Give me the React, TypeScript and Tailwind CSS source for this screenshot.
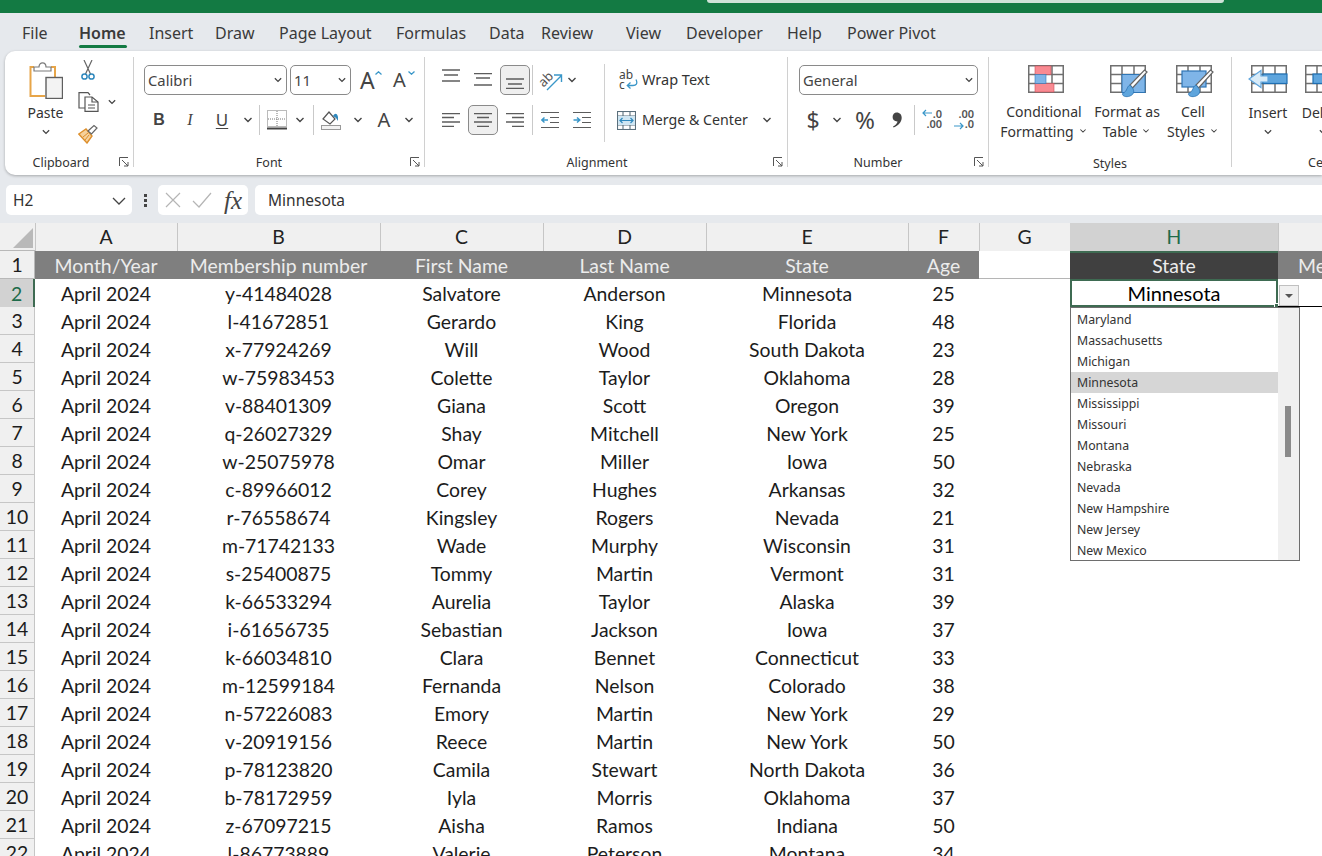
const tabs = [
  { label: "File", cls: "ml-[22px] w-[57px]" },
  { label: "Home", cls: "w-[70px] font-semibold", active: true },
  { label: "Insert", cls: "w-[66px]" },
  { label: "Draw", cls: "w-[64px]" },
  { label: "Page Layout", cls: "w-[117px]" },
  { label: "Formulas", cls: "w-[93px]" },
  { label: "Data", cls: "w-[52px]" },
  { label: "Review", cls: "w-[85px]" },
  { label: "View", cls: "w-[60px]" },
  { label: "Developer", cls: "w-[101px]" },
  { label: "Help", cls: "w-[60px]" },
  { label: "Power Pivot", cls: "w-[100px]" },
];

const rows = [
  ["y-41484028", "Salvatore", "Anderson", "Minnesota", "25"],
  ["l-41672851", "Gerardo", "King", "Florida", "48"],
  ["x-77924269", "Will", "Wood", "South Dakota", "23"],
  ["w-75983453", "Colette", "Taylor", "Oklahoma", "28"],
  ["v-88401309", "Giana", "Scott", "Oregon", "39"],
  ["q-26027329", "Shay", "Mitchell", "New York", "25"],
  ["w-25075978", "Omar", "Miller", "Iowa", "50"],
  ["c-89966012", "Corey", "Hughes", "Arkansas", "32"],
  ["r-76558674", "Kingsley", "Rogers", "Nevada", "21"],
  ["m-71742133", "Wade", "Murphy", "Wisconsin", "31"],
  ["s-25400875", "Tommy", "Martin", "Vermont", "31"],
  ["k-66533294", "Aurelia", "Taylor", "Alaska", "39"],
  ["i-61656735", "Sebastian", "Jackson", "Iowa", "37"],
  ["k-66034810", "Clara", "Bennet", "Connecticut", "33"],
  ["m-12599184", "Fernanda", "Nelson", "Colorado", "38"],
  ["n-57226083", "Emory", "Martin", "New York", "29"],
  ["v-20919156", "Reece", "Martin", "New York", "50"],
  ["p-78123820", "Camila", "Stewart", "North Dakota", "36"],
  ["b-78172959", "Iyla", "Morris", "Oklahoma", "37"],
  ["z-67097215", "Aisha", "Ramos", "Indiana", "50"],
  ["l-86773889", "Valerie", "Peterson", "Montana", "34"],
];

const states = [
  "Maryland",
  "Massachusetts",
  "Michigan",
  "Minnesota",
  "Mississippi",
  "Missouri",
  "Montana",
  "Nebraska",
  "Nevada",
  "New Hampshire",
  "New Jersey",
  "New Mexico",
];

const columns = ["A", "B", "C", "D", "E", "F", "G", "H", ""];
const titles = ["Month/Year", "Membership number", "First Name", "Last Name", "State", "Age"];

function Chev({ className = "" }: { className?: string }) {
  return (
    <svg viewBox="0 0 10 6" className={`w-[10px] h-[6px] shrink-0 ${className}`} fill="none" stroke="#444" strokeWidth="1.4">
      <path d="M1.5 1 L5 4.5 L8.5 1" />
    </svg>
  );
}

function Launcher() {
  return (
    <svg viewBox="0 0 10 10" className="absolute right-[4px] bottom-0 w-[10px] h-[10px]" fill="none" stroke="#555" strokeWidth="1">
      <path d="M0.5 9 V0.5 H9" />
      <path d="M3 3 L9 9 M9 5 V9 H5" />
    </svg>
  );
}

function Sep({ className = "" }: { className?: string }) {
  return <div className={`w-px h-[30px] bg-[#c9c9c9] shrink-0 ${className}`}></div>;
}

function Lines({ y, xs }: { y: number[]; xs: [number, number][] }) {
  return (
    <svg viewBox="0 0 18 14" className="w-[18px] h-[14px] shrink-0" stroke="#5c5c5c" strokeWidth="1.3">
      {y.map((v, i) => (
        <line key={v} x1={xs[i][0]} x2={xs[i][1]} y1={v} y2={v} />
      ))}
    </svg>
  );
}

function ActiveBox({ children, className = "" }: { children: React.ReactNode; className?: string }) {
  return (
    <div className={`w-[30px] h-[30px] rounded-[5px] border border-[#8a8a8a] bg-[#efefef] flex items-center justify-center shrink-0 ${className}`}>
      {children}
    </div>
  );
}

function Indent({ flip }: { flip?: boolean }) {
  return (
    <svg viewBox="0 0 18 18" className="w-[18px] h-[18px] shrink-0" fill="none" stroke="#5c5c5c" strokeWidth="1.2">
      <path d="M0 1.5 H18 M9 6.5 H18 M9 11.5 H18 M0 16.5 H18" />
      {flip ? (
        <path d="M0.5 9 H6.5 M4 6.5 L6.8 9 L4 11.5" stroke="#3a97c9" strokeWidth="1.5" />
      ) : (
        <path d="M7 9 H1 M3.5 6.5 L0.8 9 L3.5 11.5" stroke="#3a97c9" strokeWidth="1.5" />
      )}
    </svg>
  );
}

function PasteIcon() {
  return (
    <svg viewBox="0 0 34 38" className="w-[34px] h-[38px]" fill="none">
      <path d="M5 6 H1.5 V35 H16 M22 6 H26 V16" stroke="#e7a548" strokeWidth="2" />
      <path d="M5 10 V6 H10 C10 0.5 17 0.5 17 6 H22 V10 Z" fill="#fff" stroke="#7a7a7a" strokeWidth="1.2" />
      <rect x="17" y="16.5" width="16.5" height="21" fill="#f3f3f3" stroke="#5f5f5f" strokeWidth="1.4" />
    </svg>
  );
}

function CutIcon() {
  return (
    <svg viewBox="0 0 14 20" className="w-[14px] h-[20px]" fill="none">
      <path d="M3 0 L9.5 14 M11 0 L4.5 14" stroke="#666" strokeWidth="1.2" />
      <circle cx="3.5" cy="16.5" r="2.6" stroke="#2f88bd" strokeWidth="1.5" />
      <circle cx="10.5" cy="16.5" r="2.6" stroke="#2f88bd" strokeWidth="1.5" />
    </svg>
  );
}

function CopyIcon() {
  return (
    <svg viewBox="0 0 21 20" className="w-[21px] h-[20px]" fill="none" stroke="#555" strokeWidth="1.2">
      <path d="M7 16 H1 V0.6 H10 L12 3" />
      <path d="M7 5 H14 L20 10 V19.4 H7 Z" fill="#fff" />
      <path d="M14 5 V10 H20 M10 13 H17 M10 16 H17" />
    </svg>
  );
}

function PainterIcon() {
  return (
    <svg viewBox="0 0 20 20" className="w-[20px] h-[20px]" fill="none">
      <path d="M0.8 10 L8 5 L14 12 L9 19 Z" fill="#f6d19b" stroke="#dd8f2c" strokeWidth="1.4" />
      <path d="M5 13 L10 9 M7 16 L11 11" stroke="#dd8f2c" strokeWidth="1" />
      <path d="M10 7 L16 1.5 L19 4 L13.5 10 Z" fill="#fff" stroke="#666" strokeWidth="1.2" />
    </svg>
  );
}

function BigA({ up }: { up?: boolean }) {
  return (
    <div className="relative flex w-[20px] h-[24px] items-center">
      <span className={up ? "text-[23px] leading-none text-[#444]" : "text-[20px] leading-none text-[#444]"}>A</span>
      <svg viewBox="0 0 7 4" className="absolute right-[-2px] top-[3px] w-[7px] h-[4px]" fill="none" stroke="#3a97c9" strokeWidth="1.3">
        <path d={up ? "M0.5 3.5 L3.5 0.8 L6.5 3.5" : "M0.5 0.5 L3.5 3.2 L6.5 0.5"} />
      </svg>
    </div>
  );
}

function BordersIcon() {
  return (
    <svg viewBox="0 0 20 20" className="w-[20px] h-[20px] shrink-0" fill="none" stroke="#777" strokeWidth="1" strokeDasharray="1 1">
      <rect x="0.5" y="0.5" width="19" height="16" />
      <path d="M10 1 V17 M1 9 H19" />
      <path d="M0 18.5 H20" stroke="#444" strokeWidth="2" strokeDasharray="none" />
    </svg>
  );
}

function FillIcon() {
  return (
    <svg viewBox="0 0 20 20" className="w-[20px] h-[20px] shrink-0" fill="none">
      <path d="M2 9 L8 2 L14 9 L9 14 Z" fill="#fff" stroke="#555" strokeWidth="1.2" />
      <path d="M12 6 C14 3 16 3 17 7 L17 11 L15 8 Z" fill="#2f88bd" />
      <rect x="0.5" y="15.5" width="19" height="4" fill="#f2f2f2" stroke="#999" />
    </svg>
  );
}

function OrientIcon() {
  return (
    <svg viewBox="0 0 22 20" className="w-[22px] h-[20px] shrink-0 overflow-visible" fill="none">
      <text x="-1" y="13" fontSize="13" fill="#555" transform="rotate(-45 7 10)">ab</text>
      <path d="M7 20 L21 6 M14 5 H21.5 V12" stroke="#3a97c9" strokeWidth="1.4" />
    </svg>
  );
}

function WrapIcon() {
  return (
    <div className="relative w-[18px] h-[20px] shrink-0 text-[12px] leading-[10px] text-[#444]">
      <div>ab</div>
      <div>c</div>
      <svg viewBox="0 0 12 10" className="absolute left-[7px] top-[9px] w-[12px] h-[10px]" fill="none" stroke="#3a97c9" strokeWidth="1.3">
        <path d="M10 0.5 C12 5 10 6.5 7 6.5 H1.5 M4.5 3.5 L1.3 6.5 L4.5 9.5" />
      </svg>
    </div>
  );
}

function MergeIcon() {
  return (
    <svg viewBox="0 0 19 19" className="w-[19px] h-[19px] shrink-0" fill="none" stroke="#5a6f7c" strokeWidth="1.1">
      <rect x="0.5" y="0.5" width="18" height="18" />
      <path d="M0.5 5 H18.5 M0.5 14 H18.5 M6 0.5 V5 M13 0.5 V5 M6 14 V18.5 M13 14 V18.5" />
      <rect x="1" y="5" width="17" height="9" fill="#cfe6f3" stroke="none" />
      <path d="M3 9.5 H16 M5.5 7 L3 9.5 L5.5 12 M13.5 7 L16 9.5 L13.5 12" stroke="#2f88bd" strokeWidth="1.2" />
    </svg>
  );
}

function CommaIcon() {
  return (
    <svg viewBox="0 0 10 16" className="w-[10px] h-[16px] shrink-0">
      <path d="M4.6 0.5 C8 0.5 9.7 2.8 9.7 5.8 C9.7 10 6.4 13.8 1.6 15.5 L1 14.4 C3.6 13 5.2 11.2 5.6 9.4 C2.8 9.6 0.6 8 0.6 5 C0.6 2.3 2.4 0.5 4.6 0.5 Z" fill="#444" />
    </svg>
  );
}

function TableGrid() {
  return <path d="M0.75 0.75 H35.25 V27.25 H0.75 Z M0.75 9.5 H35.25 M0.75 18.5 H35.25 M12 0.75 V27.25 M24 0.75 V27.25" stroke="#6f6f6f" strokeWidth="1.5" fill="none" />;
}

function CondIcon() {
  return (
    <svg viewBox="0 0 36 28" className="w-[36px] h-[28px]">
      <TableGrid />
      <rect x="7" y="1" width="16" height="8.5" fill="#f98a92" stroke="#c8505a" strokeWidth="0.6" />
      <rect x="7" y="18.5" width="19" height="8.5" fill="#f98a92" stroke="#c8505a" strokeWidth="0.6" />
      <rect x="7" y="9.5" width="11" height="9" fill="#7fb5e8" stroke="#2f76b5" strokeWidth="0.6" />
    </svg>
  );
}

function Brush() {
  return (
    <g>
      <path d="M37 7 L34.5 5 L20 20 L22.5 23 Z" fill="#fff" stroke="#666" strokeWidth="1.2" />
      <path d="M20 20 C16 22 18 26 13 28 C11 30 15 33 20 31 C25 29 24 25 22.5 23 Z" fill="#5ea5dd" stroke="#2f76b5" strokeWidth="0.8" />
    </g>
  );
}

function TableIcon() {
  return (
    <svg viewBox="0 0 38 34" className="w-[38px] h-[34px]">
      <TableGrid />
      <rect x="12" y="9.5" width="23" height="18" fill="#7fb5e8" stroke="#2f76b5" strokeWidth="1" />
      <Brush />
    </svg>
  );
}

function StylesIcon() {
  return (
    <svg viewBox="0 0 38 34" className="w-[38px] h-[34px]">
      <TableGrid />
      <rect x="6" y="6" width="24" height="16" fill="#7fb5e8" stroke="#2f76b5" strokeWidth="1.2" />
      <Brush />
    </svg>
  );
}

function InsertIcon() {
  return (
    <svg viewBox="0 0 40 28" className="w-[40px] h-[28px]">
      <g transform="translate(3 0)"><TableGrid /></g>
      <rect x="15" y="9" width="24" height="9.5" fill="#5ea5dd" stroke="#1f6fb2" strokeWidth="1.2" />
      <path d="M13 5.5 L1 14 L13 22.5 V17 H20 V11 H13 Z" fill="#d8ebf8" stroke="#5ea5dd" strokeWidth="1.2" />
    </svg>
  );
}

function DeleteIcon() {
  return (
    <svg viewBox="0 0 36 28" className="w-[36px] h-[28px]">
      <TableGrid />
      <rect x="8" y="9" width="27" height="9.5" fill="#5ea5dd" stroke="#1f6fb2" strokeWidth="1.2" />
    </svg>
  );
}

function Select({ label, className }: { label: string; className: string }) {
  return (
    <div className={`h-[30px] rounded-[5px] border border-[#8a8a8a] flex items-center justify-between pl-[3px] pr-[3px] text-[14.8px] text-[#444] shrink-0 ${className}`}>
      <span>{label}</span>
      <Chev className="scale-90" />
    </div>
  );
}

function Group({ label, className, labelClass = "", launcher, children }: { label?: string; className: string; labelClass?: string; launcher?: boolean; children: React.ReactNode }) {
  return (
    <div className={`relative h-[110px] border-r border-[#d0d0d0] flex flex-col shrink-0 ${className}`}>
      <div className="flex-1 min-h-0">{children}</div>
      {label && <div className={`h-[18px] -mb-[5px] text-[12.5px] leading-[18px] text-center text-[#333] ${labelClass}`}>{label}</div>}
      {launcher && <Launcher />}
    </div>
  );
}

function StyleButton({ icon, line1, line2, className }: { icon: React.ReactNode; line1: string; line2: string; className: string }) {
  return (
    <div className={`flex flex-col items-center shrink-0 ${className}`}>
      <div className="h-[37px] flex items-start justify-center pl-[3px]">{icon}</div>
      <div className="text-[14px] leading-[19.5px] text-center text-[#333] whitespace-nowrap">{line1}</div>
      <div className="text-[14px] leading-[19.5px] flex items-center gap-[4px] text-[#333] whitespace-nowrap">
        {line2}
        <Chev className="scale-75" />
      </div>
    </div>
  );
}

function Ribbon() {
  return (
    <div className="ml-[5px] h-[124px] pt-[6px] bg-white rounded-l-[10px] shadow-[0_1px_3px_rgba(0,0,0,0.28)] flex overflow-hidden">
      <Group label="Clipboard" launcher className="w-[129px] pr-[16px]">
        <div className="flex pl-[11px] pt-[4px]">
          <div className="w-[60px] flex flex-col items-center">
            <PasteIcon />
            <div className="text-[14px] leading-[20px] mt-[4px] text-[#333]">Paste</div>
            <Chev className="mt-[6px] scale-90" />
          </div>
          <div className="flex flex-col pl-[3px] -mt-[1px]">
            <div className="pl-[3px]"><CutIcon /></div>
            <div className="flex items-center mt-[12px]">
              <CopyIcon />
              <Chev className="ml-[8px] scale-90" />
            </div>
            <div className="mt-[12px]"><PainterIcon /></div>
          </div>
        </div>
      </Group>

      <Group label="Font" launcher labelClass="pr-[20px]" className="w-[291px]">
        <div className="pt-[8px] pl-[10px]">
          <div className="flex items-center">
            <Select label="Calibri" className="w-[143px]" />
            <Select label="11" className="w-[61px] ml-[3px]" />
            <div className="ml-[9px]"><BigA up /></div>
            <div className="ml-[13px]"><BigA /></div>
          </div>
          <div className="flex items-center h-[30px] mt-[10px] text-[#444]">
            <div className="w-[30px] shrink-0 text-center font-bold text-[16px] font-['Liberation_Sans']">B</div>
            <div className="w-[30px] shrink-0 ml-px text-center italic text-[16px] font-['Liberation_Serif']">I</div>
            <div className="w-[30px] shrink-0 ml-[2px] text-center text-[17px] underline underline-offset-2">U</div>
            <Chev className="ml-[6px]" />
            <Sep className="ml-[6px]" />
            <div className="ml-[7px]"><BordersIcon /></div>
            <Chev className="ml-[8px]" />
            <Sep className="ml-[8px]" />
            <div className="ml-[7px]"><FillIcon /></div>
            <Chev className="ml-[12px]" />
            <div className="ml-[11px] w-[20px] shrink-0 text-center text-[20px] leading-none">A</div>
            <Chev className="ml-[10px]" />
          </div>
        </div>
      </Group>

      <Group label="Alignment" launcher labelClass="pr-[18px]" className="w-[363px]">
        <div className="flex pt-[7px]">
          <div className="w-[179px] pl-[17px] pt-px shrink-0">
            <div className="flex items-center h-[30px]">
              <div className="-mt-[8px]"><Lines y={[1, 6, 12]} xs={[[0, 18], [2, 16], [0, 18]]} /></div>
              <div className="ml-[14px]"><Lines y={[0.7, 5, 12]} xs={[[0, 18], [2, 16], [0, 18]]} /></div>
              <ActiveBox className="ml-[8px]"><div className="pt-[4px]"><Lines y={[4, 9, 13.4]} xs={[[0, 18], [2, 16], [0, 18]]} /></div></ActiveBox>
              <Sep className="ml-[2px]" />
              <div className="ml-[7px]"><OrientIcon /></div>
              <Chev className="ml-[5px]" />
            </div>
            <div className="flex items-center h-[30px] mt-[10px]">
              <Lines y={[0.7, 4.5, 9, 13.3]} xs={[[0, 18], [0, 12], [0, 18], [0, 12]]} />
              <ActiveBox className="ml-[8px]"><Lines y={[0.7, 4.5, 9, 13.3]} xs={[[0, 18], [3, 15], [0, 18], [3, 15]]} /></ActiveBox>
              <div className="ml-[8px]"><Lines y={[0.7, 4.5, 9, 13.3]} xs={[[0, 18], [6, 18], [0, 18], [6, 18]]} /></div>
              <Sep className="ml-[8px]" />
              <div className="ml-[8px]"><Indent /></div>
              <div className="ml-[14px]"><Indent flip /></div>
            </div>
          </div>
          <div className="w-px h-[78px] bg-[#d0d0d0] shrink-0"></div>
          <div className="pl-[12px] pt-px text-[#333]">
            <div className="flex items-center h-[30px] text-[14.5px]">
              <div className="ml-[2px]"><WrapIcon /></div>
              <span className="ml-[5px]">Wrap Text</span>
            </div>
            <div className="flex items-center h-[30px] mt-[10px] text-[14.2px]">
              <MergeIcon />
              <span className="ml-[6px] w-[120px]">Merge &amp; Center</span>
              <Chev />
            </div>
          </div>
        </div>
      </Group>

      <Group label="Number" launcher labelClass="pr-[20px]" className="w-[201px]">
        <div className="pt-[8px] pl-[11px]">
          <Select label="General" className="w-[179px]" />
          <div className="flex items-center h-[30px] mt-[10px] text-[#444]">
            <div className="w-[20px] shrink-0 ml-[4px] text-center text-[23px] leading-none">$</div>
            <Chev className="ml-[9px]" />
            <div className="w-[22px] shrink-0 ml-[12px] text-center text-[24px] leading-none">%</div>
            <div className="w-[14px] shrink-0 ml-[14px] flex justify-center"><CommaIcon /></div>
            <Sep className="ml-[10px]" />
            <div className="ml-[7px] relative w-[20px] h-[22px] shrink-0 text-[11px] leading-[10px] font-semibold text-right text-[#555]">
              <div>.0</div>
              <div>.00</div>
              <svg viewBox="0 0 10 8" className="absolute left-0 top-0 w-[10px] h-[8px]" fill="none" stroke="#3a97c9" strokeWidth="1.2"><path d="M10 4 H1 M4 1 L1 4 L4 7" /></svg>
            </div>
            <div className="ml-[12px] relative w-[20px] h-[22px] shrink-0 text-[11px] leading-[10px] font-semibold text-right text-[#555]">
              <div>.00</div>
              <div>.0</div>
              <svg viewBox="0 0 10 8" className="absolute left-0 bottom-[1px] w-[10px] h-[8px]" fill="none" stroke="#3a97c9" strokeWidth="1.2"><path d="M0 4 H9 M6 1 L9 4 L6 7" /></svg>
            </div>
          </div>
        </div>
      </Group>

      <Group label="Styles" labelClass="pt-px" className="w-[243px]">
        <div className="flex pt-[8px] pl-[11px]">
          <StyleButton icon={<CondIcon />} line1="Conditional" line2="Formatting" className="w-[88px]" />
          <StyleButton icon={<TableIcon />} line1="Format as" line2="Table" className="w-[78px]" />
          <StyleButton icon={<StylesIcon />} line1="Cell" line2="Styles" className="w-[50px] ml-[2px]" />
        </div>
      </Group>

      <div className="flex pt-[8px] pl-[6px] shrink-0 relative h-[110px] text-[14px] text-[#333]">
        <div className="w-[60px] flex flex-col items-center shrink-0">
          <InsertIcon />
          <div className="mt-[10px] leading-[20px]">Insert</div>
          <Chev className="mt-[6px] scale-90" />
        </div>
        <div className="w-[60px] -ml-[5px] flex flex-col items-center shrink-0">
          <DeleteIcon />
          <div className="mt-[10px] leading-[20px]">Delete</div>
          <Chev className="mt-[6px] scale-90" />
        </div>
        <div className="absolute left-[76px] -bottom-[5px] h-[18px] text-[12.5px] leading-[18px]">Cells</div>
      </div>
    </div>
  );
}

function FormulaBar() {
  return (
    <div className="h-[30px] mt-[10px] flex items-center text-[15.5px] text-[#333]">
      <div className="ml-[6px] w-[126px] h-[30px] pt-px bg-white rounded-[5px] flex items-center justify-between pl-[7px] pr-[6px]">
        <span>H2</span>
        <svg viewBox="0 0 14 8" className="w-[14px] h-[8px]" fill="none" stroke="#444" strokeWidth="1.3"><path d="M1 1 L7 7 L13 1" /></svg>
      </div>
      <div className="w-[26px] flex flex-col items-center gap-[2px]">
        <div className="w-[3px] h-[3px] bg-[#444]"></div>
        <div className="w-[3px] h-[3px] bg-[#444]"></div>
        <div className="w-[3px] h-[3px] bg-[#444]"></div>
      </div>
      <div className="w-[90px] h-[30px] bg-white rounded-[5px] flex items-center pl-[7px]">
        <svg viewBox="0 0 16 16" className="w-[16px] h-[16px]" fill="none" stroke="#b5b5b5" strokeWidth="1.2"><path d="M1 1 L15 15 M15 1 L1 15" /></svg>
        <svg viewBox="0 0 20 16" className="ml-[11px] w-[20px] h-[16px]" fill="none" stroke="#b5b5b5" strokeWidth="1.2"><path d="M1 9 L7 15 L19 1" /></svg>
        <span className="ml-[12px] font-['Liberation_Serif'] italic text-[25px] leading-none text-[#444]">fx</span>
      </div>
      <div className="ml-[7px] flex-1 h-[30px] pt-px bg-white rounded-l-[5px] flex items-center pl-[13px]">Minnesota</div>
    </div>
  );
}

function ColumnHeaders() {
  return (
    <>
      <div className="h-[28px] bg-[#f0f0f0] border-b border-[#b8b8b8] relative">
        <svg viewBox="0 0 20 20" className="absolute right-[2px] bottom-[2px] w-[20px] h-[20px]"><path d="M20 0 V20 H0 Z" fill="#b9b9b9" /></svg>
      </div>
      {columns.map((c) => (
        <div
          key={c || "I"}
          className={
            c === "H"
              ? "h-[28px] bg-[#d2d2d2] text-[#1e6b4a] flex items-center justify-center"
              : "h-[28px] pr-px bg-[#f0f0f0] text-[#222] border-l border-[#c6c6c6] flex items-center justify-center"
          }
        >
          {c}
        </div>
      ))}
    </>
  );
}

function Dropdown() {
  return (
    <div className="absolute left-[1070px] top-[84px] w-[230px] h-[254px] bg-white border border-[#6e6e6e] flex font-['Noto_Sans'] text-[12.3px] text-[#333]">
      <div className="w-[207px] pt-px">
        {states.map((s) => (
          <div key={s} className={s === "Minnesota" ? "h-[21px] leading-[21px] pl-[6px] bg-[#d6d6d6]" : "h-[21px] leading-[21px] pl-[6px]"}>
            {s}
          </div>
        ))}
      </div>
      <div className="flex-1 bg-[#f0f0f0] relative">
        <div className="absolute left-[7px] top-[98px] w-[6px] h-[51px] bg-[#8a8a8a]"></div>
      </div>
    </div>
  );
}

function Sheet() {
  return (
    <div className="relative mt-[8px] bg-white font-['Lato'] text-[19.4px] text-[#1c1c1c] overflow-hidden">
      <div className="grid grid-cols-[35px_142px_203px_163px_163px_202px_71px_91px_208px_44px] auto-rows-[28px]">
        <ColumnHeaders />

        <div className="bg-[#f0f0f0] border-r border-b border-[#b8b8b8] flex items-center justify-center pt-px">1</div>
        {titles.map((t) => (
          <div key={t} className="bg-[#7f7f7f] text-[#ececec] flex items-center justify-center whitespace-nowrap pt-px">{t}</div>
        ))}
        <div className="border-b border-[#b5b5b5]"></div>
        <div className="bg-[#404040] text-[#ececec] border-t-2 border-[#3e6b52] flex items-center justify-center">State</div>
        <div className="bg-[#7f7f7f] text-[#ececec] pl-[20px] flex items-center overflow-hidden whitespace-nowrap pt-px">Membership</div>

        {rows.map((r, i) => (
          <div key={r[0]} className="contents">
            <div
              className={
                i === 0
                  ? "bg-[#d2d2d2] text-[#1e6b4a] border-r-2 border-[#3e6b52] flex items-center justify-center pt-px"
                  : "bg-[#f0f0f0] border-r border-b border-[#c6c6c6] flex items-center justify-center pt-px"
              }
            >
              {i + 2}
            </div>
            <div className="flex items-center justify-center pt-px">April 2024</div>
            {r.map((v, j) => (
              <div key={j} className="flex items-center justify-center whitespace-nowrap pt-px">{v}</div>
            ))}
            <div></div>
            {i === 0 ? (
              <div className="relative border-2 border-[#3e6b52] flex items-center justify-center text-[20px] text-black">
                Minnesota
                <div className="absolute -right-[3px] -bottom-[3px] w-[5px] h-[5px] bg-[#3e6b52] border border-white"></div>
              </div>
            ) : (
              <div></div>
            )}
            {i === 0 ? (
              <div className="border-b border-black relative">
                <div className="absolute left-px top-[6px] w-[20px] h-[21px] bg-[#f0f0f0] border border-[#c0c0c0] flex items-center justify-center">
                  <svg viewBox="0 0 8 4" className="w-[8px] h-[4px]"><path d="M0 0 H8 L4 4 Z" fill="#555" /></svg>
                </div>
              </div>
            ) : (
              <div></div>
            )}
          </div>
        ))}
      </div>
      <Dropdown />
    </div>
  );
}

export default function App() {
  return (
    <div className="w-[1322px] h-[856px] overflow-hidden bg-[#e6e9ed] font-['Noto_Sans']">
      <div className="h-[13px] bg-[#137a43] relative">
        <div className="absolute left-[707px] top-0 w-[517px] h-[3px] bg-[#cfe3d8] rounded-b-[4px]"></div>
      </div>
      <div className="h-[38px] pt-[2px] flex items-center text-[16px] text-[#3a3a3a]">
        {tabs.map((t) => (
          <div key={t.label} className={`relative whitespace-nowrap shrink-0 ${t.cls}`}>
            {t.label}
            {t.active && <div className="absolute left-0 top-[24px] w-[48px] h-[3px] rounded-full bg-[#137a43]"></div>}
          </div>
        ))}
      </div>
      <Ribbon />
      <FormulaBar />
      <Sheet />
    </div>
  );
}
